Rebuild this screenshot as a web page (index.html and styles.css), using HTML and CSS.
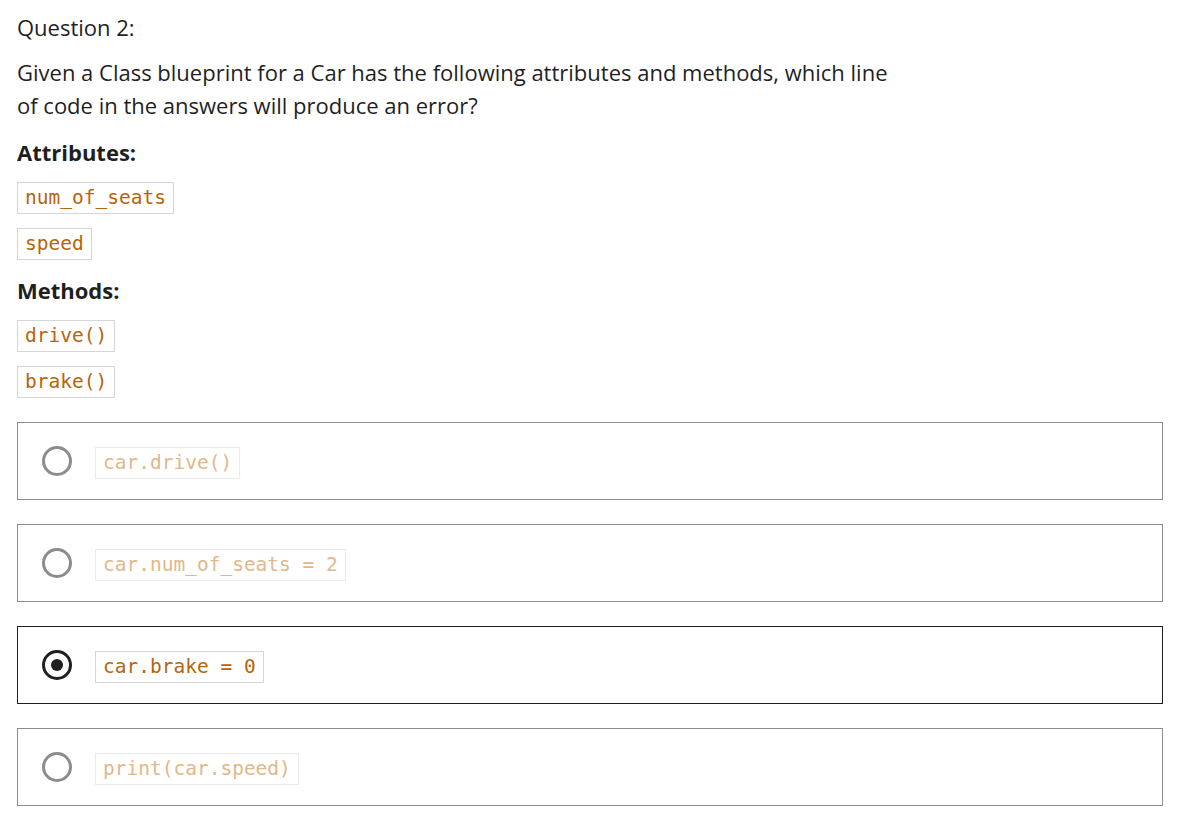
FILE: index.html
```html
<!DOCTYPE html>
<html>
<head>
<meta charset="utf-8">
<link rel="stylesheet" href="styles.css">
</head>
<body>
<div class="page">
  <p class="qnum">Question 2:</p>
  <p class="prompt">Given a Class blueprint for a Car has the following attributes and methods, which line of code in the answers will produce an error?</p>
  <h3 class="label">Attributes:</h3>
  <div class="codes">
    <code class="chip">num_of_seats</code>
    <code class="chip">speed</code>
  </div>
  <h3 class="label">Methods:</h3>
  <div class="codes">
    <code class="chip">drive()</code>
    <code class="chip">brake()</code>
  </div>
  <div class="options">
    <div class="option">
      <span class="radio"></span>
      <code class="chip answer faded">car.drive()</code>
    </div>
    <div class="option">
      <span class="radio"></span>
      <code class="chip answer faded">car.num_of_seats = 2</code>
    </div>
    <div class="option selected">
      <span class="radio checked"></span>
      <code class="chip answer">car.brake = 0</code>
    </div>
    <div class="option">
      <span class="radio"></span>
      <code class="chip answer faded">print(car.speed)</code>
    </div>
  </div>
</div>
</body>
</html>
```
FILE: styles.css
```css
html, body {
  margin: 0;
  padding: 0;
  background: #ffffff;
}
.page {
  padding: 8px 19px 0 17px;
  font-family: "Open Sans", "Noto Sans", sans-serif;
  color: #1f1f1f;
  font-size: 22px;
}
.qnum {
  margin: 0;
  line-height: 38px;
}
.prompt {
  margin: 10px 0 0 0;
  line-height: 33px;
  max-width: 880px;
}
.label {
  margin: 15px 0 0 0;
  font-size: 22px;
  font-weight: 700;
  line-height: 30px;
}
.codes {
  display: flex;
  flex-direction: column;
  align-items: flex-start;
  gap: 14px;
  margin-top: 15px;
}
.chip {
  display: inline-block;
  font-family: "DejaVu Sans Mono", monospace;
  font-size: 19.5px;
  line-height: 30px;
  padding: 0 7px;
  border: 1px solid #d3d6db;
  color: #b5650c;
  background: #fff;
}
.chip.answer {
  margin-top: 4px;
}
.chip.faded {
  color: #e0b88a;
  border-color: #ebebeb;
}
.options {
  display: flex;
  flex-direction: column;
  gap: 24px;
  margin-top: 24px;
}
.option {
  display: flex;
  align-items: center;
  height: 76px;
  border: 1px solid #8c8c8c;
  padding-left: 24px;
  gap: 23px;
}
.option.selected {
  border-color: #1f1f1f;
}
.radio {
  box-sizing: border-box;
  width: 30px;
  height: 30px;
  border-radius: 50%;
  border: 3px solid #8c8c8c;
  display: flex;
  align-items: center;
  justify-content: center;
  flex: none;
}
.radio.checked {
  border-color: #1f1f1f;
}
.radio.checked::after {
  content: "";
  width: 12px;
  height: 12px;
  border-radius: 50%;
  background: #1f1f1f;
}
```
